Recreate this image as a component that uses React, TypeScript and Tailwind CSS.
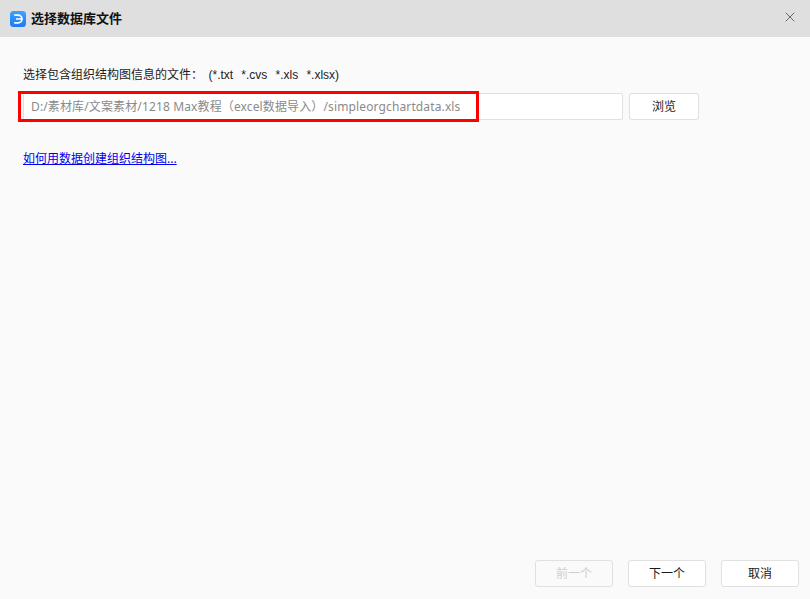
import { X } from 'lucide-react'

const font = { fontFamily: '"Noto Sans", "Noto Sans CJK SC", sans-serif' }

function Logo() {
  return (
    <svg width="16" height="16" viewBox="0 0 16 16" className="shrink-0">
      <defs>
        <linearGradient id="logo" x1="0" y1="0" x2="0" y2="1">
          <stop offset="0" stopColor="#3ea0ff" />
          <stop offset="1" stopColor="#1a7cf2" />
        </linearGradient>
      </defs>
      <rect width="16" height="16" rx="3.5" fill="url(#logo)" />
      <path d="M4.2 4.2H8.2a3.8 3.8 0 0 1 0 7.6H4.2M6 8h5.5" fill="none" stroke="#fff" strokeWidth="1.7" />
    </svg>
  )
}

function App() {
  return (
    <div style={font} className="w-[810px] h-[599px] flex flex-col bg-[#fafafa] text-[#1a1a1a] overflow-hidden">
      {/* Title bar */}
      <div className="h-[37px] shrink-0 bg-[#dfdfdf] flex items-center pl-[10px] pr-[12px]">
        <Logo />
        <span className="ml-[5px] text-[13px] font-bold text-[#111]">选择数据库文件</span>
        <X className="ml-auto mb-[3px] w-[16px] h-[16px] text-[#555]" strokeWidth={1.3} />
      </div>

      {/* Body */}
      <div className="flex-1 flex flex-col pl-[23px] pt-[30px]">
        <div className="h-[14px] leading-[14px] text-[12px] whitespace-pre mt-[1px]">
          选择包含组织结构图信息的文件：
          <span className="font-['Liberation_Sans'] [word-spacing:-0.6px]">  (*.txt   *.cvs   *.xls   *.xlsx)</span>
        </div>

        <div className="mt-[11px] flex gap-[6px]">
          <div className="relative w-[600px] h-[27px] bg-white border border-[#e0e0e0] rounded-[2px] flex items-center pl-[7px] text-[12px] tracking-[0.13px] text-[#8a8a8a]">
            D:/素材库/文案素材/1218 Max教程（excel数据导入）/simpleorgchartdata.xls
            {/* Red annotation box */}
            <div className="absolute left-[-6px] top-[-3px] w-[461px] h-[31px] border-[3px] border-[#ff0000]" />
          </div>
          <button className="w-[70px] h-[27px] bg-white border border-[#e0e0e0] rounded-[3px] text-[12px] text-[#1a1a1a]">浏览</button>
        </div>

        <a href="#" className="mt-[31px] text-[12px] leading-[16px] text-[#0000ee] underline self-start">如何用数据创建组织结构图...</a>
      </div>

      {/* Footer */}
      <div className="shrink-0 flex justify-end gap-[15px] pr-[11px] pb-[12px]">
        <button disabled className="w-[78px] h-[27px] bg-[#fafafa] border border-[#e0e0e0] rounded-[3px] text-[12px] text-[#cfcfcf]">前一个</button>
        <button className="w-[78px] h-[27px] bg-white border border-[#e0e0e0] rounded-[3px] text-[12px]">下一个</button>
        <button className="w-[78px] h-[27px] bg-white border border-[#e0e0e0] rounded-[3px] text-[12px]">取消</button>
      </div>
    </div>
  )
}

export default App
